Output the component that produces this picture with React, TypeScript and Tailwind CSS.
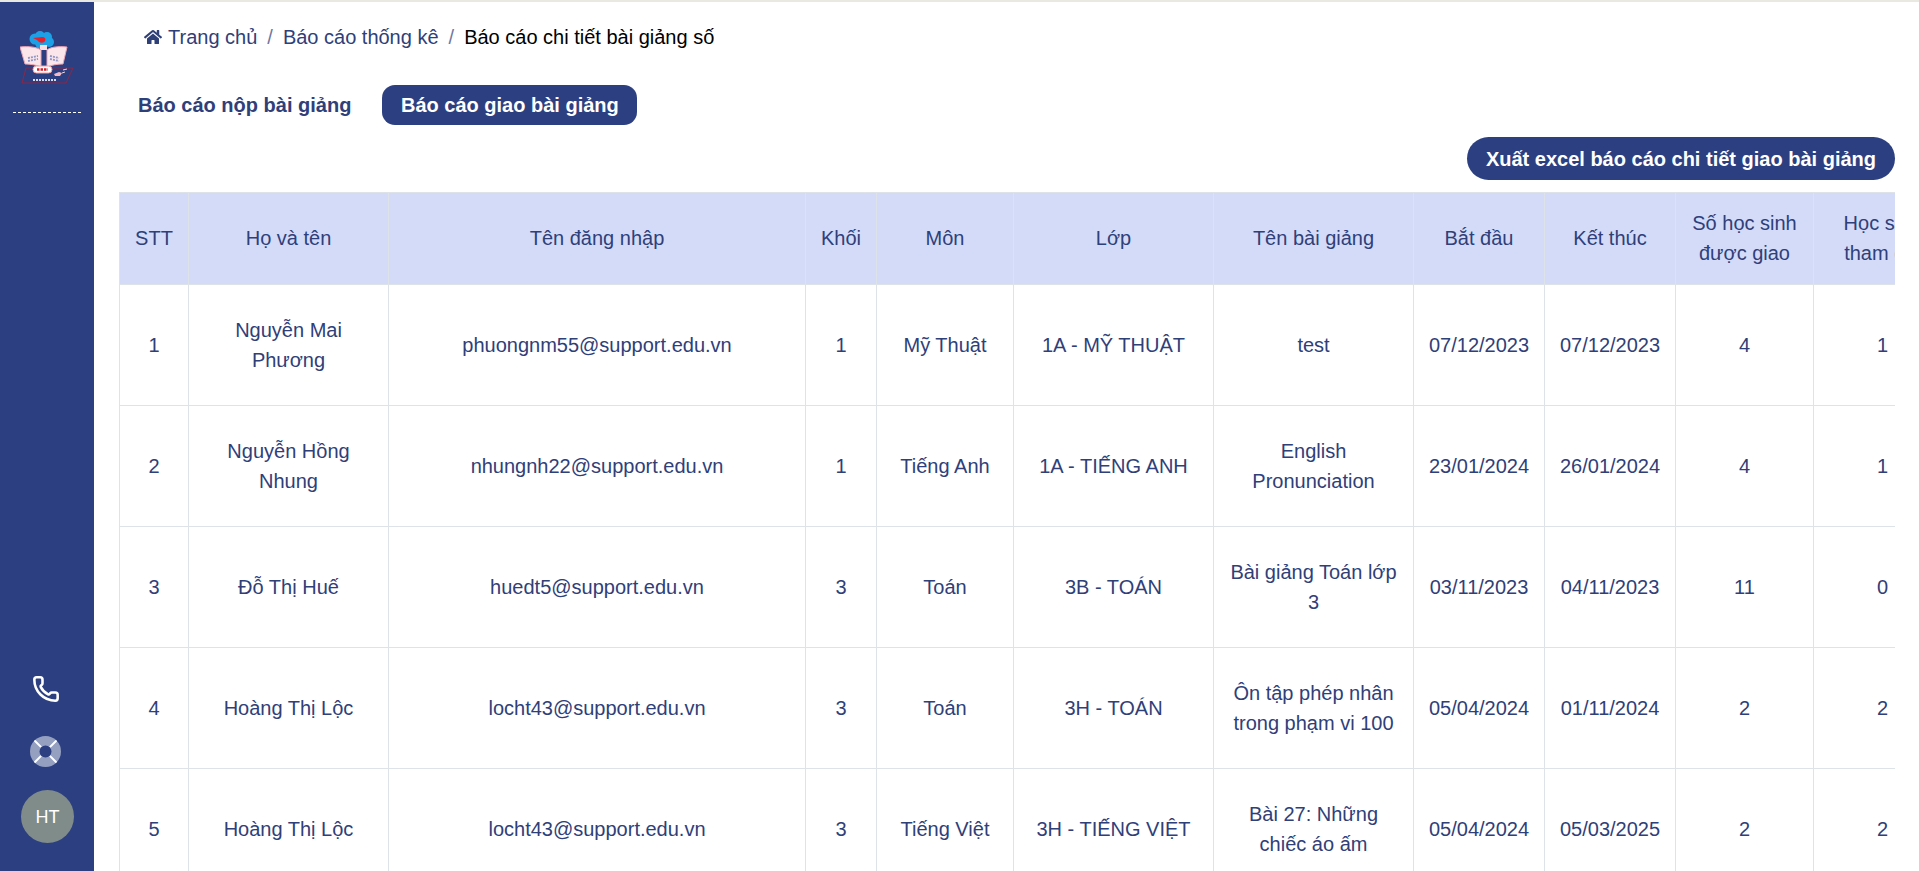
import { Phone } from "lucide-react";
import { FaHome } from "react-icons/fa";

const rows = [
  ["1", "Nguyễn Mai Phương", "phuongnm55@support.edu.vn", "1", "Mỹ Thuật", "1A - MỸ THUẬT", "test", "07/12/2023", "07/12/2023", "4", "1"],
  ["2", "Nguyễn Hồng Nhung", "nhungnh22@support.edu.vn", "1", "Tiếng Anh", "1A - TIẾNG ANH", "English Pronunciation", "23/01/2024", "26/01/2024", "4", "1"],
  ["3", "Đỗ Thị Huế", "huedt5@support.edu.vn", "3", "Toán", "3B - TOÁN", "Bài giảng Toán lớp 3", "03/11/2023", "04/11/2023", "11", "0"],
  ["4", "Hoàng Thị Lộc", "locht43@support.edu.vn", "3", "Toán", "3H - TOÁN", "Ôn tập phép nhân trong phạm vi 100", "05/04/2024", "01/11/2024", "2", "2"],
  ["5", "Hoàng Thị Lộc", "locht43@support.edu.vn", "3", "Tiếng Việt", "3H - TIẾNG VIỆT", "Bài 27: Những chiếc áo ấm", "05/04/2024", "05/03/2025", "2", "2"],
];

const headers = [
  "STT",
  "Họ và tên",
  "Tên đăng nhập",
  "Khối",
  "Môn",
  "Lớp",
  "Tên bài giảng",
  "Bắt đầu",
  "Kết thúc",
  "Số học sinh được giao",
  "Học sinh tham gia",
];

const Logo = () => (
  <svg width="60" height="60" viewBox="0 0 60 60" className="block">
    {/* cloud */}
    <circle cx="15" cy="9" r="5.5" fill="#1ea0e6" />
    <circle cx="20" cy="6" r="5" fill="#1ea0e6" />
    <circle cx="27" cy="7" r="5" fill="#1ea0e6" />
    <circle cx="29" cy="12" r="5" fill="#1ea0e6" />
    <circle cx="21" cy="13" r="6" fill="#1ea0e6" />
    <path d="M13 8l9-1c3 0 4 2 3 4-1 2-4 2-6 1l-2-2z" fill="#e8202a" />
    <rect x="20" y="15" width="7" height="5" fill="#f6dde3" />
    {/* open book */}
    <path d="M0 17c8-1 17 0 21 3v17c-4-2-11-3-16-3z" fill="#fae6eb" stroke="#eda5b5" />
    <path d="M47 17c-8-1-17 0-20 3v17c4-2 11-3 16-3z" fill="#fae6eb" stroke="#eda5b5" />
    <path d="M8 28l10-2M8 31l10-2M30 26l9 2M30 29l9 2" stroke="#9297c6" strokeWidth="1.8" strokeDasharray="2 1" />
    {/* base */}
    <path d="M6 38h47l-7 15H2z" fill="none" stroke="#8e2746" />
    <rect x="13" y="36" width="19" height="7" rx="3.5" fill="#fff" stroke="#f0a0a8" />
    <path d="M17 39.5h11" stroke="#d8202a" strokeWidth="2.5" strokeDasharray="2.5 1" />
    <path d="M34 44l5-2 3 1-2 3-5 0z" fill="#f3b9c4" />
    <path d="M43 40l4-1M42 43l3-1" stroke="#f3d5da" />
    <path d="M13 50h24" stroke="#d7dcf0" strokeWidth="2" strokeDasharray="2 1" />
  </svg>
);

const LifeBuoy = () => (
  <svg width="31" height="31" viewBox="0 0 31 31" className="block">
    <circle cx="15.5" cy="15.5" r="15.5" fill="#95a0c1" />
    <circle cx="15.5" cy="15.5" r="6" fill="#2c3f80" />
    <path d="M4.5 4.5l6.6 6.6M26.5 4.5l-6.6 6.6M4.5 26.5l6.6-6.6M26.5 26.5l-6.6-6.6" stroke="#fff" strokeWidth="2" />
  </svg>
);

export default function App() {
  return (
    <div className="flex h-screen flex-col overflow-hidden border-t-2 border-[#e9e9e2] bg-white font-['Liberation_Sans',Arial,sans-serif] text-[20px] leading-[30px] text-[#2f4079]">
      <div className="flex min-h-0 flex-1">
        <aside className="flex w-[94px] shrink-0 flex-col items-center bg-[#2c3f80] pb-[28px]">
          <div className="mt-[28px] ml-[6px]">
            <Logo />
          </div>
          <div className="mt-[22px] w-[68px] border-t border-dashed border-white" />
          <Phone size={28} strokeWidth={2.2} className="mt-auto mr-[3px] text-white" />
          <div className="mt-[33px] mr-[3px]">
            <LifeBuoy />
          </div>
          <div className="mt-[23px] flex h-[53px] w-[53px] items-center justify-center rounded-full bg-[#808c8a] pl-[1px] text-[18px] text-white">
            HT
          </div>
        </aside>

        <main className="min-w-0 flex-1 pr-[24px] pl-[25px]">
          <nav className="mt-[20px] flex items-center pl-[25px]">
            <FaHome size={18} className="mr-[6px]" />
            <span>Trang chủ</span>
            <span className="mx-[10px] opacity-70">/</span>
            <span>Báo cáo thống kê</span>
            <span className="mx-[10px] opacity-70">/</span>
            <span className="text-black">Báo cáo chi tiết bài giảng số</span>
          </nav>

          <div className="mt-[33px] flex gap-[12px] font-bold">
            <button className="h-[40px] rounded-[13px] px-[19px]">Báo cáo nộp bài giảng</button>
            <button className="h-[40px] w-[255px] rounded-[13px] bg-[#2c3f80] text-white">Báo cáo giao bài giảng</button>
          </div>

          <div className="mt-[12px] flex justify-end">
            <button className="h-[43px] rounded-full bg-[#2c3f80] px-[19px] font-bold text-white">
              Xuất excel báo cáo chi tiết giao bài giảng
            </button>
          </div>

          <div className="mt-[12px] overflow-hidden">
            <table className="w-[1832px] table-fixed border-collapse text-center">
              <colgroup>
                <col className="w-[69px]" />
                <col className="w-[200px]" />
                <col className="w-[417px]" />
                <col className="w-[71px]" />
                <col className="w-[137px]" />
                <col className="w-[200px]" />
                <col className="w-[200px]" />
                <col className="w-[131px]" />
                <col className="w-[131px]" />
                <col className="w-[138px]" />
                <col className="w-[138px]" />
              </colgroup>
              <thead>
                <tr className="h-[92px] bg-[#d3dbf9]">
                  {headers.map((h) => (
                    <th key={h} className="border border-[#dee2e9] px-[15px] pb-[1px] font-normal">
                      {h}
                    </th>
                  ))}
                </tr>
              </thead>
              <tbody>
                {rows.map((row) => (
                  <tr key={row[0]} className="h-[121px]">
                    {row.map((cell, i) => (
                      <td key={i} className="border border-[#dee2e9] px-[15px]">
                        {cell}
                      </td>
                    ))}
                  </tr>
                ))}
              </tbody>
            </table>
          </div>
        </main>
      </div>
    </div>
  );
}
